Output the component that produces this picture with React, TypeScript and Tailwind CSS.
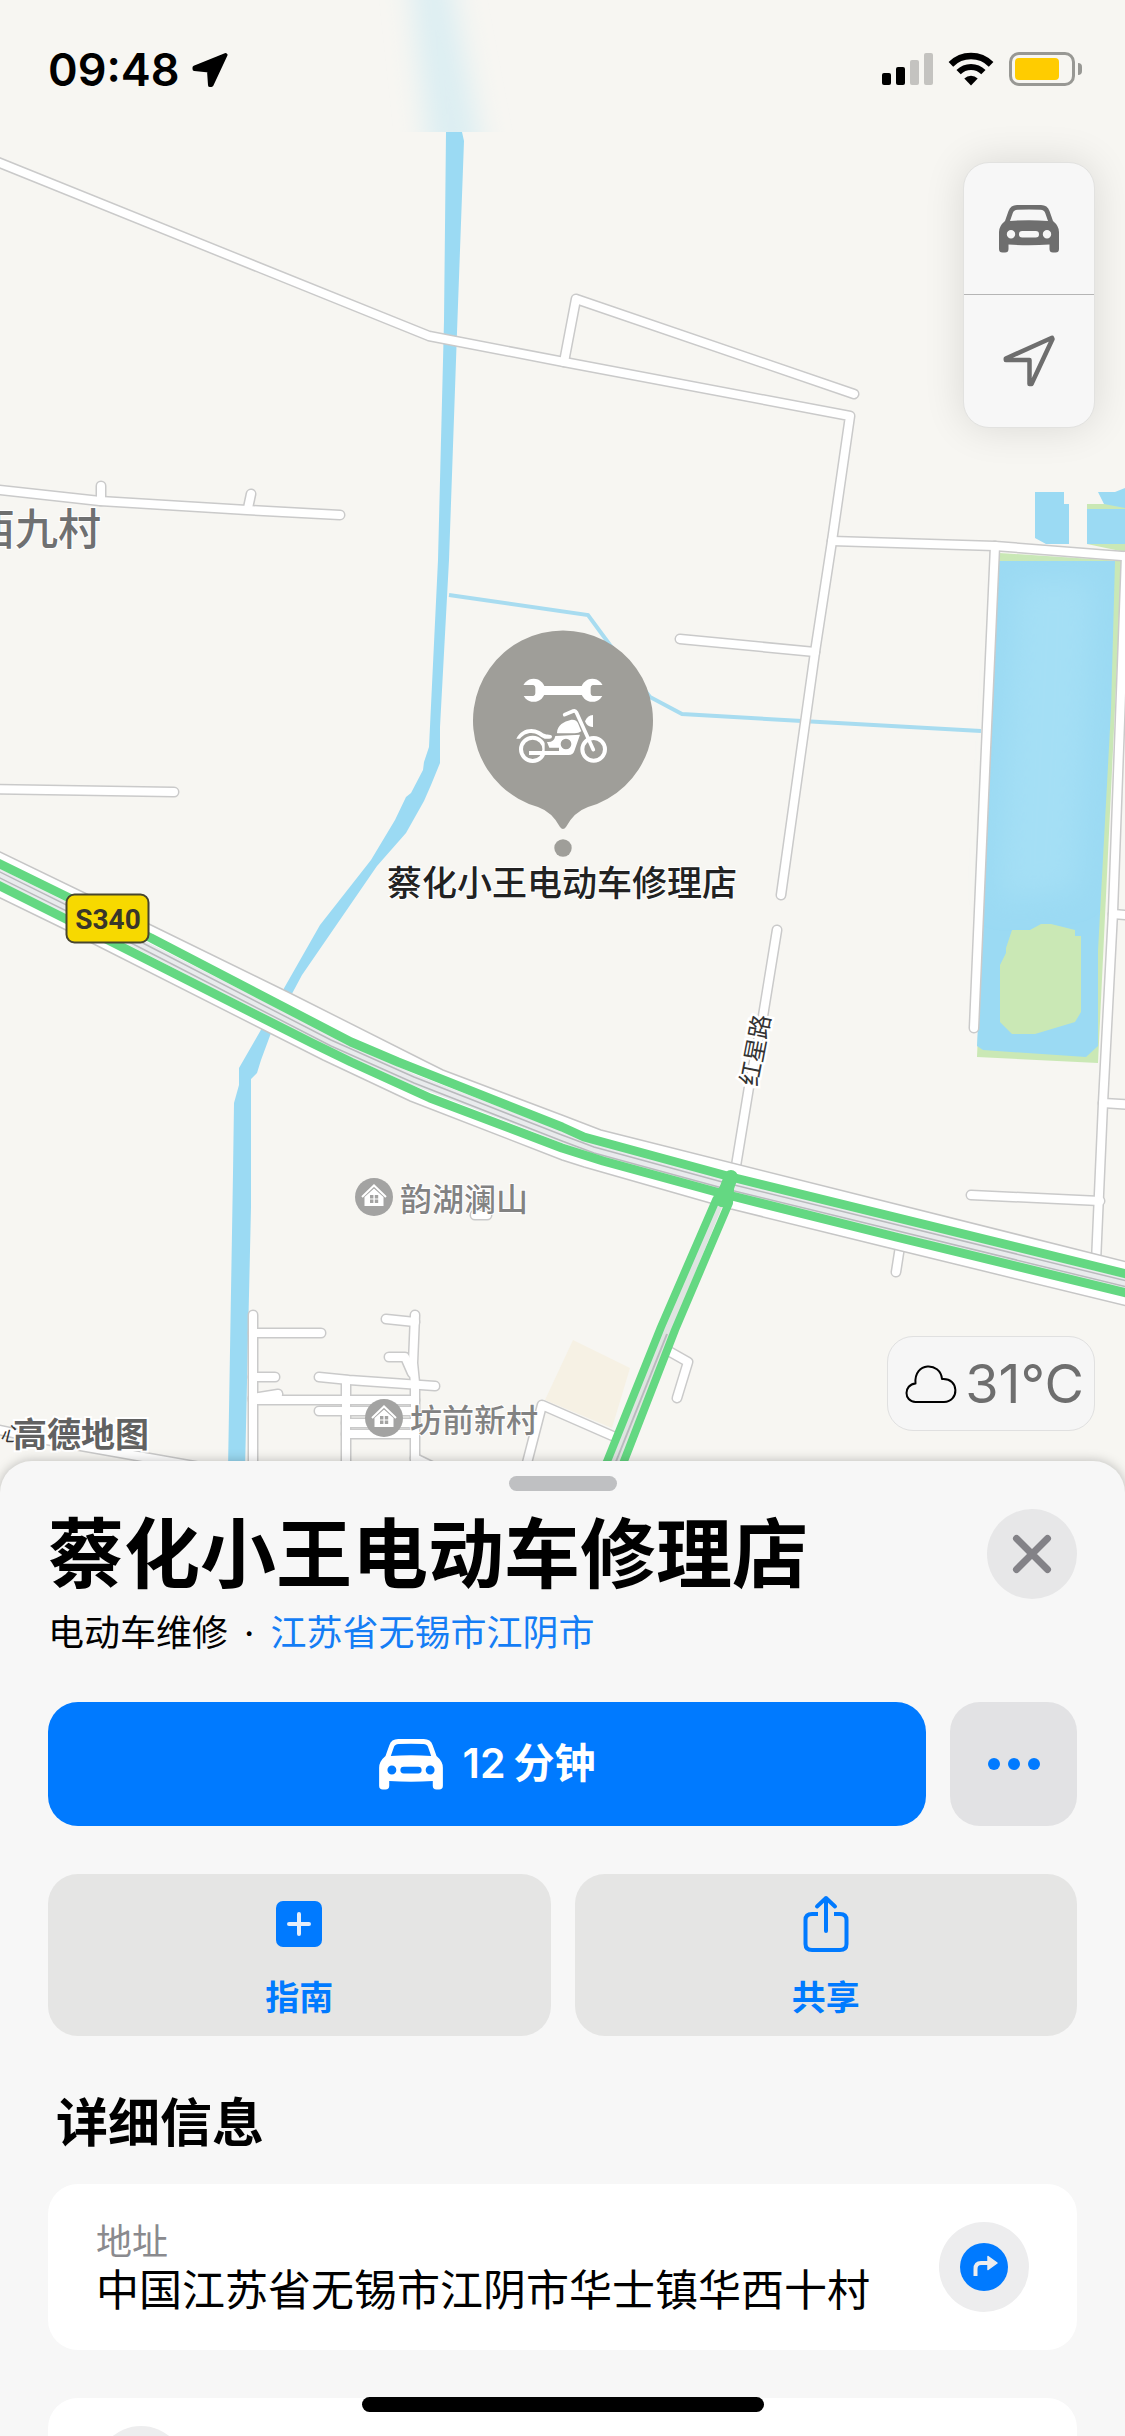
import type { ReactNode } from "react";
import clsx from "clsx";

const FONT = "font-['Inter','Noto_Sans_CJK_SC',sans-serif]";

const ROADS = [
  "M-10 159 L429 336 L564 362 L850 416 L832 541 L815 652 L781 895",
  "M564 362 L576 299 L854 394",
  "M832 541 L995 546 L1135 557",
  "M680 639 L815 652",
  "M995 546 L986 748 L974 1028",
  "M1126 556 L1113 912 L1103 1103 L1096 1262",
  "M1113 914 L1135 916",
  "M1103 1103 L1135 1105",
  "M971 1195 L1100 1201",
  "M777 930 L763 1016 L749 1087 L734 1178",
  "M901 1240 L896 1272",
  "M-10 489 L100 501 L247 510 L340 515",
  "M101 486 V501",
  "M251 494 L248 508",
  "M-10 789 L174 792",
  "M665 1349 L688 1362 L677 1398",
  "M520 1490 L542 1405 L615 1437",
  "M253 1315 V1480",
  "M253 1333 H321",
  "M253 1377 H275",
  "M253 1398 L278 1394",
  "M253 1400 H415",
  "M319 1377 L349 1380 L435 1386",
  "M319 1411 H415",
  "M346 1423 H415",
  "M346 1434 H415",
  "M346 1380 V1480",
  "M415 1315 L413 1363 L415 1383 V1480",
  "M386 1319 L415 1322",
  "M389 1357 H405 L412 1373",
  "M415 1458 L460 1480",
  "M-10 1428 L47 1440 L200 1467",
  "M475 1215 H487",
];

const HIGHWAY =
  "M-10 847 L0 852 L151 925 L290 993 L423 1060 L443 1070 L562 1115 L601 1130 L1135 1264 V1308 L885 1247 L731 1209 L584 1167 L562 1160 L410 1101 L323 1060 L66 930 L-10 893 Z";

const TRAFFIC = [
  "M-10 859 L151 938 L351 1042 L398 1062 L562 1127 L584 1137 L731 1177 L1135 1276",
  "M-10 881 L118 945 L312 1043 L351 1062 L430 1098 L562 1148 L603 1161 L720 1193 L896 1237 L1135 1295",
];

const SIDE_TRAFFIC = [
  "M731 1177 L716 1200 L661 1327 L602 1474",
  "M731 1177 L729 1203 L706 1257 L675 1330 L619 1474",
];

function CarIcon({ className }: { className?: string }) {
  return (
    <svg viewBox="0 0 60 48" className={className} fill="currentColor" aria-hidden>
      <path
        fillRule="evenodd"
        d="M6 16 L9.500 6 Q11.500 0 18 0 Q30 -.6 42 0 Q48.500 0 50.500 6 L54 16 Q60 21 60 27 V44 Q60 47.500 56.500 47.500 H54 Q50.500 47.500 50.500 44 V39.500 Q30 41 9.500 39.500 V44 Q9.500 47.500 6 47.500 H3.500 Q0 47.500 0 44 V27 Q0 21 6 16 Z M11 16 Q30 14.500 49 16 L46.300 8.200 Q45.300 5 41.500 4.800 Q30 4.200 18.500 4.800 Q14.700 5 13.700 8.200 Z M12 25 A4.200 4.200 0 1 0 12 33.400 A4.200 4.200 0 1 0 12 25 Z M48 25 A4.200 4.200 0 1 0 48 33.400 A4.200 4.200 0 1 0 48 25 Z M23.200 26 H36.800 A3.200 3.200 0 0 1 36.800 32.400 H23.200 A3.200 3.200 0 0 1 23.200 26 Z"
      />
    </svg>
  );
}

function HousePin({ x, y, name }: { x: number; y: number; name: string }) {
  return (
    <g transform={`translate(${x} ${y})`}>
      <circle r="19" fill="#a3a3a2" />
      <path d="M-12 0 L0 -11.500 L12 0" fill="none" stroke="#fff" strokeWidth="2" />
      <path d="M-9.500 9 V0 L0 -8.500 L9.500 0 V9 Z" fill="#fff" />
      <path d="M-4 -2 h3.400 v3.400 h-3.400 z M.8 -2 h3.400 v3.400 h-3.400 z M-4 2.600 h3.400 v3.400 h-3.400 z M.8 2.600 h3.400 v3.400 h-3.400 z" fill="#a3a3a2" />
      <text x="26" y="14" fontSize="32" fontWeight="500" fill="#828282" stroke="#fff" strokeWidth="2" paintOrder="stroke">
        {name}
      </text>
    </g>
  );
}

function PlacePin() {
  return (
    <g>
      <path
        d="M538 807 A90 90 0 1 1 588 807 Q574 812 566 827 Q563 831 560 827 Q552 812 538 807 Z"
        fill="#9f9e99"
      />
      <circle cx="563" cy="848" r="8.700" fill="#9f9e99" />
      {/* wrench over motorcycle */}
      <g transform="translate(450 600) scale(.33333)" fill="#fff">
        <circle cx="251" cy="271" r="34.500" />
        <circle cx="427" cy="271" r="34.500" />
        <rect x="270" y="258" width="140" height="27" />
        <path d="M214 255 H250 Q256 257 256 263 V280 Q256 286 250 288 H214 Z M464 255 H428 Q422 257 422 263 V280 Q422 286 428 288 H464 Z" fill="#9f9e99" />
        <g fill="none" stroke="#fff">
          <circle cx="248" cy="448" r="35" strokeWidth="12" />
          <circle cx="431" cy="448" r="34" strokeWidth="12" />
        </g>
        <path d="M284 418 L296 444 H330 V455 H284 Z" fill="#9f9e99" />
        <path d="M199 416 C212 388 244 380 268 393 C280 400 284 404 297 404 Q306 404 306 410 Q306 416 298 416 H284 Q276 414 266 406 C246 392 222 400 210 416 Z" />
        <path d="M321 398 C322 376 342 364 362 360 C374 358 382 364 384 370 L394 394 Q386 400 374 400 H322 Z" />
        <path
          fillRule="evenodd"
          d="M291 426 Q312 428 316 408 L390 404 L373 453 Q369 465 356 465 H237 V453 H327 V443 H298 Z M348 416 A16 16 0 1 0 348 448 A16 16 0 1 0 348 416 Z"
        />
        <path d="M344 344 L370 333 Q376 331 379 337 L430 449" fill="none" stroke="#fff" strokeWidth="11" strokeLinecap="round" strokeLinejoin="round" />
        <path d="M429 345 V381 Q412 382 405 364 Q412 346 429 345 Z" />
      </g>
      <text x="562" y="896" textAnchor="middle" fontSize="35" fontWeight="500" fill="#222" stroke="#fff" strokeWidth="2" paintOrder="stroke">
        蔡化小王电动车修理店
      </text>
    </g>
  );
}

function MapCanvas() {
  return (
    <svg
      viewBox="0 0 1125 2436"
      preserveAspectRatio="xMidYMin slice"
      className="absolute inset-0 h-full w-full"
      role="img"
      aria-label="地图"
    >
      <defs>
        <filter id="soft" x="-50%" y="-50%" width="200%" height="200%">
          <feGaussianBlur stdDeviation="14" />
        </filter>
        <clipPath id="statusStrip">
          <rect width="1125" height="132" />
        </clipPath>
      </defs>

      {/* parks and water */}
      <path d="M999 553 L1122 561 L1098 1063 L977 1057 Z M1087 504 H1125 V552 L1087 544 Z" fill="#cae8b5" />
      <path d="M999 561 H1115 L1111 710 L1098 951 V1046 L1086 1057 L983 1050 L977 1046 Z" fill="#9bdaf3" />
      <path d="M1018 580 H1092 L1086 720 L1076 890 L1000 900 Z" fill="#a4dff5" filter="url(#soft)" />
      <path d="M1012 930 H1030 L1041 924 H1051 L1075 930 V936 H1081 V1012 L1075 1022 L1035 1034 H1012 L1000 1022 V965 L1006 953 V948 Z" fill="#cae8b5" />
      <path d="M1035 492 H1064 V504 H1069 V544 H1046 L1035 538 Z M1087 509 H1125 V544 H1087 Z M1098 492 H1115 L1125 488 V508 L1104 504 Z" fill="#9bdaf3" />
      <path
        d="M446 132 H462 L464 141 L457 332 L449 560 L440 727 V763 L431 785 L424 801 L406 833 L377 866 L302 975 L271 1033 L261 1060 L257 1073 L251 1079 V1207 L245 1470 H228 L233 1173 L234 1103 L239 1085 V1068 L262 1028 L283 990 L320 925 L371 860 L395 820 L406 797 L411 793 L423 770 L424 762 L429 747 L438 560 L444 321 Z"
        fill="#9bdaf3"
      />
      <path d="M449 595 L588 615 L610 645 L650 697 L682 714 L802 721 L981 731" fill="none" stroke="#a8dcf0" strokeWidth="4" />
      <path d="M573 1340 L630 1368 L612 1428 L545 1400 Z" fill="#f6f1e4" />

      {/* roads */}
      <g fill="none" strokeLinecap="round" strokeLinejoin="round">
        {ROADS.map((d) => (
          <path key={d} d={d} stroke="#cacaca" strokeWidth="11" />
        ))}
        {ROADS.map((d) => (
          <path key={d} d={d} stroke="#fff" strokeWidth="8" />
        ))}
      </g>
      <path d={HIGHWAY} fill="#fff" stroke="#c6c6c6" strokeWidth="1.500" />
      <path d="M-10 870 L135 942 L331 1042 L414 1080 L562 1137 L594 1149 L726 1185 L1135 1286" fill="none" stroke="#e9ebed" strokeWidth="11" />
      <path d="M-10 867 L135 939 L331 1040 L414 1077 L562 1135 L594 1147 L726 1183 L1135 1283 M-10 873 L135 945 L331 1046 L414 1083 L562 1141 L594 1153 L726 1189 L1135 1289" fill="none" stroke="#b9babd" strokeWidth="1.500" />
      <path d="M718 1205 L667 1330 L611 1474" fill="none" stroke="#dfe4e1" strokeWidth="9" />
      <path d="M667 1334 L611 1474" fill="none" stroke="#b9babd" strokeWidth="2" />
      <g fill="none" stroke="#64d882" strokeLinejoin="round">
        {TRAFFIC.map((d) => (
          <path key={d} d={d} strokeWidth="9" />
        ))}
        {SIDE_TRAFFIC.map((d) => (
          <path key={d} d={d} strokeWidth="8" />
        ))}
      </g>
      <path d="M731 1177 L722 1200" stroke="#64d882" strokeWidth="14" strokeLinecap="round" />

      {/* labels */}
      <rect x="66.500" y="894.500" width="82" height="48" rx="8" fill="#f7d900" stroke="#47452f" strokeWidth="2" />
      <text x="108" y="929" textAnchor="middle" fontSize="28" fontWeight="700" fill="#38362a" fontFamily="Roboto,sans-serif">
        S340
      </text>
      <text x="101" y="545" textAnchor="end" fontSize="43" fontWeight="500" fill="#6f7071" stroke="#fff" strokeWidth="2" paintOrder="stroke">
        西九村
      </text>
      <text transform="translate(755 1050) rotate(-79)" x="0" y="9" textAnchor="middle" fontSize="24" fill="#333" stroke="#fff" strokeWidth="5" paintOrder="stroke">
        红星路
      </text>
      <HousePin x={374} y={1197} name="韵湖澜山" />
      <HousePin x={384} y={1418} name="坊前新村" />
      <text x="0" y="1441" fontSize="20" fontStyle="italic" fill="#333">
        心
      </text>
      <text x="13" y="1447" fontSize="34" fontWeight="700" fill="#616161" stroke="#fff" strokeWidth="4" paintOrder="stroke">
        高德地图
      </text>

      <PlacePin />

      {/* river showing through the frosted status bar */}
      <g clipPath="url(#statusStrip)">
        <rect width="1125" height="132" fill="#f7f6f2" />
        <path d="M408 -40 H446 L488 180 H432 Z" fill="#dceef2" filter="url(#soft)" />
      </g>
    </svg>
  );
}

function StatusBar() {
  return (
    <header className="flex h-[132px] items-start justify-between pt-[52px] pr-[43px] pl-12 text-black">
      <div className="flex items-center gap-3">
        <span className="text-[45px] leading-9 font-semibold">09:48</span>
        <svg viewBox="0 0 36 36" className="size-9" fill="currentColor" stroke="currentColor" strokeWidth="4" strokeLinejoin="round" aria-hidden>
          <path d="M33.500 3 L2.500 15.500 L2.500 17 L17 18.500 L18 33 L19.500 33 Z" />
        </svg>
      </div>
      <div className="flex items-center gap-[15px]">
        <div className="flex h-[34px] items-end gap-[5px] pb-px">
          <span className="h-3 w-[9px] rounded-[2px] bg-black" />
          <span className="h-[18px] w-[9px] rounded-[2px] bg-black" />
          <span className="h-[25px] w-[9px] rounded-[2px] bg-[#c4c3c0]" />
          <span className="h-8 w-[9px] rounded-[2px] bg-[#c4c3c0]" />
        </div>
        <svg viewBox="0 0 46 34" className="h-[34px] w-[46px]" fill="none" stroke="currentColor" aria-hidden>
          <path d="M2.900 12.400 A28.500 28.500 0 0 1 43.100 12.400" strokeWidth="6.500" />
          <path d="M10.600 20.100 A17.500 17.500 0 0 1 35.400 20.100" strokeWidth="6" />
          <path d="M23 33.500 L16.300 26.500 A9.500 9.500 0 0 1 29.700 26.500 Z" fill="currentColor" stroke="none" />
        </svg>
        <div className="flex items-center gap-[3px]">
          <div className="h-[34px] w-[66px] rounded-[10px] border-[3px] border-[#989894] p-[3px]">
            <div className="h-full w-11 rounded-[4px] bg-[#ffcc00]" />
          </div>
          <span className="h-3 w-1 rounded-r-full bg-[#989894]" />
        </div>
      </div>
    </header>
  );
}

function ActionButton({ label, children }: { label: string; children: ReactNode }) {
  return (
    <button
      type="button"
      className="flex h-[162px] flex-1 flex-col items-center rounded-[30px] bg-[#e5e5e4] pt-5 text-[34px] leading-10 font-semibold text-[#007aff]"
    >
      <span className="flex h-[60px] items-center">{children}</span>
      <span className="mt-6">{label}</span>
    </button>
  );
}

export default function App() {
  return (
    <div className={clsx("relative flex h-screen flex-col overflow-hidden bg-[#f7f6f2]", FONT)}>
      <MapCanvas />

      <section className="relative flex min-h-0 flex-1 flex-col">
        <StatusBar />
        <div className="mt-[30px] mr-[30px] flex w-[132px] flex-col self-end rounded-[26px] border border-[#e2e2e0] bg-[#f7f7f7] text-[#6e6e6e] shadow-[0_0_40px_rgba(0,0,0,0.12)]">
          <button type="button" aria-label="驾车地图" className="flex h-[132px] items-center justify-center border-b border-[#b5b5b5]">
            <CarIcon className="h-12 w-[60px]" />
          </button>
          <button type="button" aria-label="定位" className="flex h-[132px] items-center justify-center">
            <svg viewBox="0 0 52 52" className="size-[52px]" fill="none" stroke="currentColor" strokeWidth="4.500" strokeLinejoin="round" aria-hidden>
              <path d="M49 2.800 L2.800 23.500 V25 H26.500 V49 H28.500 L49.500 4 Z" />
            </svg>
          </button>
        </div>
        <div className="mt-auto mr-[30px] mb-[30px] flex h-[95px] items-center gap-2 self-end rounded-[26px] border border-[#e0e0e0] bg-[#f6f6f6] pr-[10px] pl-[17px]">
          <svg viewBox="0 0 52 40" className="h-10 w-[52px] text-black" fill="none" stroke="currentColor" strokeWidth="2" strokeLinejoin="round" aria-hidden>
            <path d="M10.500 38 C-1.500 37.500 -1.500 20.500 10.500 19.500 C8.500 -2.500 35.500 -2.500 37 15 C54.500 13.500 54.500 38 39 38 Z" />
          </svg>
          <span className="text-[54px] leading-none text-[#6e6e6e]">31°C</span>
        </div>
      </section>

      <main className="relative shrink-0 rounded-t-[32px] bg-[#f7f7f7] px-12 pt-[15px] shadow-[0_0_12px_rgba(0,0,0,0.25)]">
        <div className="mx-auto h-[15px] w-[108px] rounded-full bg-[#bfc0c2]" />

        <div className="mt-[18px] flex h-[90px] items-center justify-between">
          <h1 className="text-[76px] leading-none font-bold text-black">蔡化小王电动车修理店</h1>
          <button type="button" aria-label="关闭" className="flex size-[90px] items-center justify-center rounded-full bg-[#e7e7e8] text-[#838287]">
            <svg viewBox="0 0 40 40" className="size-10" stroke="currentColor" strokeWidth="7" strokeLinecap="round" aria-hidden>
              <path d="M4.500 4.500 L35.500 35.500 M35.500 4.500 L4.500 35.500" />
            </svg>
          </button>
        </div>

        <p className="mt-3 flex gap-4 text-[36px] leading-[44px] text-black">
          <span>电动车维修</span>
          <span>·</span>
          <a href="#city" className="text-[#147df5]">
            江苏省无锡市江阴市
          </a>
        </p>

        <div className="mt-[47px] flex gap-6">
          <button
            type="button"
            className="flex h-[124px] flex-1 items-center justify-center gap-5 rounded-[30px] bg-[#007aff] text-[41px] font-semibold text-white"
          >
            <CarIcon className="h-[51px] w-16" />
            <span className="flex items-center gap-2">
              <span>12</span>
              <span>分钟</span>
            </span>
          </button>
          <button type="button" aria-label="更多" className="flex h-[124px] w-[127px] items-center justify-center gap-2 rounded-[30px] bg-[#e2e2e4]">
            <span className="size-3 rounded-full bg-[#007aff]" />
            <span className="size-3 rounded-full bg-[#007aff]" />
            <span className="size-3 rounded-full bg-[#007aff]" />
          </button>
        </div>

        <div className="mt-12 flex gap-6">
          <ActionButton label="指南">
            <svg viewBox="0 0 46 46" className="size-[46px]" aria-hidden>
              <rect width="46" height="46" rx="7" fill="#007aff" />
              <path d="M23 13 V33 M13 23 H33" stroke="#e5eefa" strokeWidth="4" strokeLinecap="round" />
            </svg>
          </ActionButton>
          <ActionButton label="共享">
            <svg viewBox="0 0 46 58" className="h-[58px] w-[46px]" fill="none" stroke="currentColor" strokeWidth="4" strokeLinecap="round" strokeLinejoin="round" aria-hidden>
              <path d="M15 19 H9 Q2.500 19 2.500 25 V49 Q2.500 55 9 55 H37 Q43.500 55 43.500 49 V25 Q43.500 19 37 19 H31" strokeLinecap="butt" />
              <path d="M23 36 V3 M14 11.500 L23 3 L32 11.500" />
            </svg>
          </ActionButton>
        </div>

        <h2 className="mt-[52px] mb-6 pl-2 text-[52px] leading-[72px] font-bold text-black">详细信息</h2>

        <div className="flex h-[166px] items-center justify-between rounded-[30px] bg-white px-12">
          <dl>
            <dt className="text-[36px] leading-[46px] text-[#8a8a8e]">地址</dt>
            <dd className="text-[43px] leading-[50px] text-black">中国江苏省无锡市江阴市华士镇华西十村</dd>
          </dl>
          <button type="button" aria-label="路线" className="flex size-[90px] shrink-0 items-center justify-center rounded-full bg-[#ededee]">
            <svg viewBox="0 0 48 48" className="size-12" aria-hidden>
              <circle cx="24" cy="24" r="24" fill="#007aff" />
              <path d="M15.500 33 V26 Q15.500 20 21 20 H29" fill="none" stroke="#ededee" strokeWidth="4" />
              <path d="M28 13.500 L37 20 L28 26.500 Z" fill="#ededee" stroke="#ededee" strokeWidth="1.500" strokeLinejoin="round" />
            </svg>
          </button>
        </div>

        <div className="mt-12 h-[38px] overflow-hidden rounded-t-[30px] bg-white px-12 pt-7">
          <div className="size-[90px] rounded-full bg-[#ededee]" />
        </div>
      </main>

      {/* home indicator */}
      <div className="absolute bottom-6 left-1/2 h-[15px] w-[402px] -translate-x-1/2 rounded-full bg-black" />
    </div>
  );
}
